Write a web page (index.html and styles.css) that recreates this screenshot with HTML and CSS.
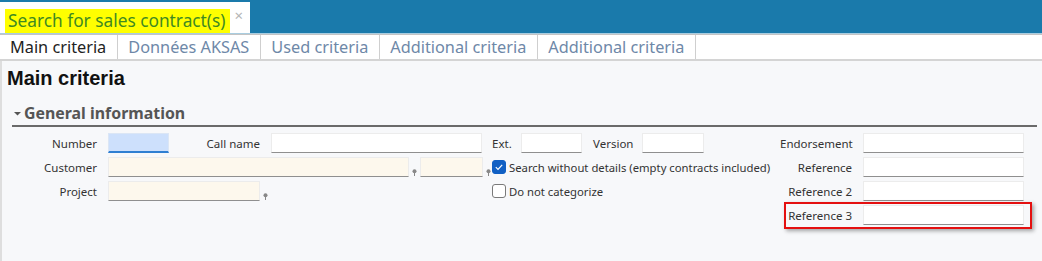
FILE: index.html
```html
<!DOCTYPE html>
<html lang="en">
<head>
    <meta charset="UTF-8">
    <title>Search for sales contract(s)</title>
    <link rel="stylesheet" href="styles.css">
</head>
<body>
    <div class="titlebar">
        <div class="doc-tab">
            <span class="doc-title">Search for sales contract(s)</span>
            <span class="close">&times;</span>
        </div>
    </div>

    <div class="tabs">
        <div class="tab active">Main criteria</div>
        <div class="tab">Données AKSAS</div>
        <div class="tab">Used criteria</div>
        <div class="tab">Additional criteria</div>
        <div class="tab">Additional criteria</div>
    </div>

    <div class="page">
        <h1>Main criteria</h1>

        <div class="group-head">
            <svg class="caret" width="7" height="5" viewBox="0 0 7 5"><path d="M0 1h7L3.5 4.5z" fill="#555"/></svg>
            <span>General information</span>
        </div>

        <div class="form">
            <div class="col col-left">
                <div class="row">
                    <label class="lbl">Number</label>
                    <input class="fld fld-focus w-num" type="text">
                    <label class="lbl lbl-call">Call name</label>
                    <input class="fld w-call" type="text">
                </div>
                <div class="row">
                    <label class="lbl">Customer</label>
                    <input class="fld fld-req w-cust" type="text">
                    <span class="pin"><svg width="5" height="7" viewBox="0 0 5 7"><circle cx="2.5" cy="2.3" r="2" fill="#888"/><path d="M2.5 3v4" stroke="#888" stroke-width="1"/></svg></span>
                    <input class="fld fld-req w-cust2" type="text">
                    <span class="pin"><svg width="5" height="7" viewBox="0 0 5 7"><circle cx="2.5" cy="2.3" r="2" fill="#888"/><path d="M2.5 3v4" stroke="#888" stroke-width="1"/></svg></span>
                </div>
                <div class="row">
                    <label class="lbl">Project</label>
                    <input class="fld fld-req w-proj" type="text">
                    <span class="pin"><svg width="5" height="7" viewBox="0 0 5 7"><circle cx="2.5" cy="2.3" r="2" fill="#888"/><path d="M2.5 3v4" stroke="#888" stroke-width="1"/></svg></span>
                </div>
            </div>

            <div class="col col-mid">
                <div class="row">
                    <label class="lbl-inline lbl-ext">Ext.</label>
                    <input class="fld w-ext" type="text">
                    <label class="lbl-inline lbl-version">Version</label>
                    <input class="fld w-ver" type="text">
                </div>
                <div class="row">
                    <span class="check checked">
                        <svg width="14" height="14" viewBox="0 0 14 14"><path d="M3.8 7.2l2.2 2.2 4.2-4.6" fill="none" stroke="#fff" stroke-width="1.2"/></svg>
                    </span>
                    <span class="check-text">Search without details (empty contracts included)</span>
                </div>
                <div class="row">
                    <span class="check"></span>
                    <span class="check-text">Do not categorize</span>
                </div>
            </div>

            <div class="col col-right">
                <div class="row">
                    <label class="lbl lbl-right">Endorsement</label>
                    <input class="fld w-ref" type="text">
                </div>
                <div class="row">
                    <label class="lbl lbl-right">Reference</label>
                    <input class="fld w-ref" type="text">
                </div>
                <div class="row">
                    <label class="lbl lbl-right">Reference 2</label>
                    <input class="fld w-ref" type="text">
                </div>
                <div class="row marked">
                    <label class="lbl lbl-right">Reference 3</label>
                    <input class="fld w-ref" type="text">
                </div>
            </div>
        </div>
    </div>
</body>
</html>
```

FILE: styles.css
```css
body {
    margin: 0;
    background: #f7f8fa;
    font-family: "Noto Sans", "Open Sans", sans-serif;
    color: #333;
    overflow: hidden;
}

.titlebar {
    background: #1a7aab;
    height: 33px;
    display: flex;
    align-items: flex-end;
    border-bottom: 1px solid #a9cde0;
}

.doc-tab {
    background: white;
    width: 250px;
    height: 31px;
    display: flex;
    align-items: flex-end;
    box-sizing: border-box;
    padding-left: 5px;
}

.doc-title {
    background: #ffff00;
    color: #3f8a22;
    font-size: 17.3px;
    line-height: 24px;
    padding: 0 4px 0 3px;
}

.close {
    color: #b5b5b5;
    font-size: 15px;
    align-self: flex-start;
    margin: 3px 0 0 5px;
}

.tabs {
    display: flex;
    background: white;
    border-top: 1px solid #c4c4c4;
    border-bottom: 2px solid #d4d4d4;
    height: 24px;
}

.tab {
    font-size: 16.3px;
    line-height: 24px;
    color: #6e88a8;
    padding: 0 11px 0 10px;
    border-right: 1px solid #cfcfcf;
}

.tab.active {
    color: #222;
}

.page {
    border-left: 2px solid #dedede;
    height: 200px;
}

h1 {
    font-family: "Liberation Sans", Arial, sans-serif;
    font-size: 20px;
    font-weight: bold;
    color: #111;
    margin: 0;
    padding: 5px 0 0 5px;
    line-height: 24px;
}

.group-head {
    display: flex;
    align-items: center;
    margin: 11px 5px 0 10px;
    padding: 1px 0 1px 2px;
    border-bottom: 2px solid #6a6a6a;
    font-size: 15.9px;
    font-weight: bold;
    color: #555;
    line-height: 22px;
}

.caret {
    margin-right: 3px;
}

.form {
    display: flex;
    margin: 6px 0 0 10px;
}

.col {
    display: flex;
    flex-direction: column;
    gap: 4px;
}

.col-left {
    width: 480px;
}

.col-mid {
    width: 288px;
}

.row {
    display: flex;
    align-items: center;
    height: 20px;
}

.lbl {
    width: 85px;
    text-align: right;
    margin-right: 11px;
    font-size: 11.5px;
    flex-shrink: 0;
}

.lbl-call {
    width: 91px;
}

.lbl-right {
    width: 72px;
}

.lbl-inline {
    font-size: 11.5px;
    flex-shrink: 0;
}

.lbl-ext {
    width: 29px;
}

.lbl-version {
    width: 49px;
    margin-left: 11px;
}

.fld {
    height: 20px;
    box-sizing: border-box;
    border: 1px solid #ececec;
    border-bottom: 1px solid #8f8f8f;
    background: white;
    padding: 0 4px;
    margin: 0;
    font-size: 12px;
    outline: none;
    flex-shrink: 0;
}

.fld-req {
    background: #fdf8ed;
}

.fld-focus {
    background: #cde0fc;
    border-color: #dbe6f5;
    border-bottom: 2px solid #2f7fd2;
}

.w-num { width: 61px; }
.w-call { width: 211px; }
.w-cust { width: 301px; }
.w-cust2 { width: 63px; }
.w-proj { width: 152px; }
.w-ext { width: 61px; }
.w-ver { width: 62px; }
.w-ref { width: 161px; }

.pin {
    width: 11px;
    height: 20px;
    display: flex;
    align-items: flex-end;
    justify-content: center;
    padding-bottom: 1px;
    box-sizing: border-box;
    flex-shrink: 0;
}

.check {
    width: 14px;
    height: 14px;
    box-sizing: border-box;
    border: 1px solid #7a7a7a;
    border-radius: 3px;
    background: white;
    margin-right: 3px;
    display: flex;
    flex-shrink: 0;
}

.check.checked {
    background: #1160c4;
    border-color: #1160c4;
}

.check svg {
    margin: -1px;
}

.check-text {
    font-size: 11.3px;
    white-space: nowrap;
}

.marked {
    margin: -3px 0 0 4px;
    padding: 1px 6px 2px 0;
    border: 2px solid #e41010;
    box-shadow: 2px 2px 4px rgba(0, 0, 0, 0.35);
    height: 20px;
}

.marked .lbl {
    width: 66px;
}
```
